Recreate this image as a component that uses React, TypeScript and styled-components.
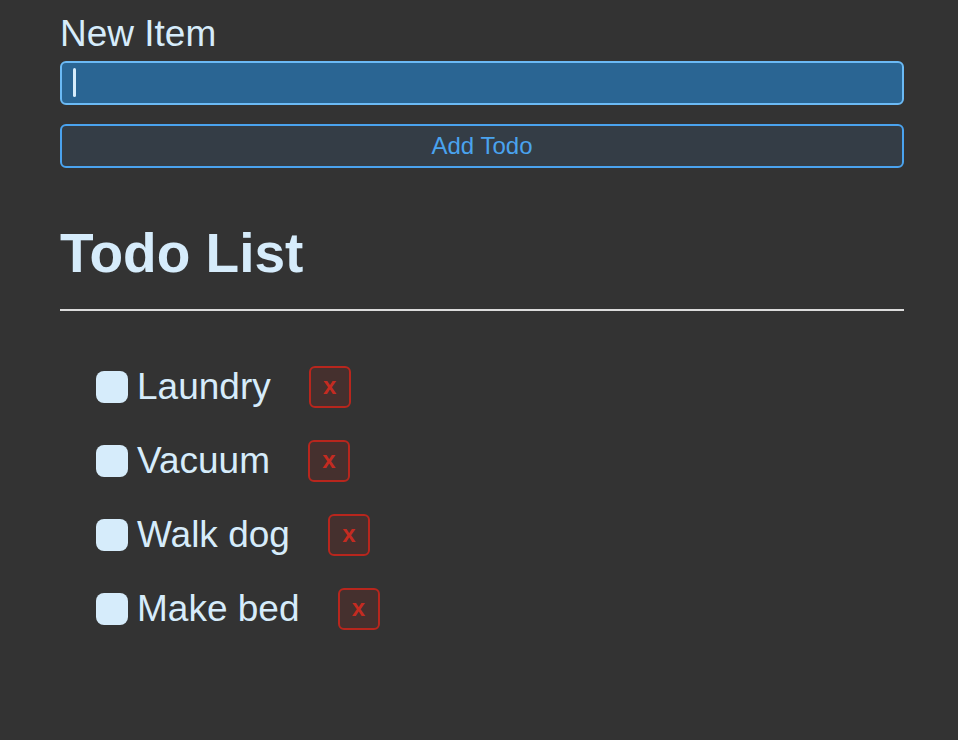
import React from "react";
import styled, { createGlobalStyle } from "styled-components";

const Global = createGlobalStyle`
  html, body { margin: 0; padding: 0; background: #333333; }
  body { font-family: "Liberation Sans", Arial, sans-serif; color: #d6ecfb; }
  * { box-sizing: border-box; }
`;

const Page = styled.div`
  width: 958px;
  min-height: 740px;
  padding: 13px 54px 0 60px;
  background: #333333;
`;

const Label = styled.label`
  display: block;
  font-size: 37px;
  line-height: 42px;
  color: #d6ecfb;
  margin-bottom: 6px;
`;

const InputWrap = styled.div`
  position: relative;
`;

const TextInput = styled.input`
  display: block;
  width: 100%;
  height: 44px;
  border: 2px solid #6bbaf5;
  border-radius: 6px;
  background: #2a6593;
  color: #d6ecfb;
  font-family: inherit;
  font-size: 24px;
  padding: 0 12px;
  outline: none;
`;

const Caret = styled.span`
  position: absolute;
  left: 13px;
  top: 7px;
  width: 3px;
  height: 29px;
  border-radius: 2px;
  background: #d6ecfb;
`;

const AddButton = styled.button`
  display: block;
  width: 100%;
  height: 44px;
  margin-top: 19px;
  border: 2px solid #4aa3ef;
  border-radius: 6px;
  background: #343d46;
  color: #4aa3ef;
  font-family: inherit;
  font-size: 24px;
  cursor: pointer;
`;

const Heading = styled.h1`
  margin: 54px 0 0;
  font-size: 55px;
  line-height: 62px;
  font-weight: bold;
  color: #d6ecfb;
`;

const Rule = styled.hr`
  margin: 25px 0 0;
  border: none;
  height: 2px;
  background: #dcdcdc;
`;

const List = styled.ul`
  list-style: none;
  margin: 55px 0 0;
  padding: 0 0 0 36px;
  display: flex;
  flex-direction: column;
  gap: 32px;
`;

const Row = styled.li`
  display: flex;
  align-items: center;
  height: 42px;
`;

const Check = styled.span`
  display: inline-block;
  width: 32px;
  height: 32px;
  border-radius: 8px;
  background: #d6ecfb;
  flex-shrink: 0;
`;

const ItemText = styled.span`
  font-size: 37px;
  line-height: 42px;
  margin-left: 9px;
  color: #d6ecfb;
`;

const DeleteButton = styled.button`
  width: 42px;
  height: 42px;
  margin-left: 38px;
  border: 2px solid #b8261d;
  border-radius: 6px;
  background: #45302e;
  color: #c42b21;
  font-family: inherit;
  font-size: 24px;
  font-weight: bold;
  line-height: 1;
  padding: 0 0 3px;
  display: flex;
  align-items: center;
  justify-content: center;
`;

const todos = ["Laundry", "Vacuum", "Walk dog", "Make bed"];

export default function App() {
  return (
    <>
      <Global />
      <Page>
        <Label htmlFor="new-item">New Item</Label>
        <InputWrap>
          <TextInput id="new-item" type="text" />
          <Caret />
        </InputWrap>
        <AddButton>Add Todo</AddButton>
        <Heading>Todo List</Heading>
        <Rule />
        <List>
          {todos.map((t) => (
            <Row key={t}>
              <Check />
              <ItemText>{t}</ItemText>
              <DeleteButton>x</DeleteButton>
            </Row>
          ))}
        </List>
      </Page>
    </>
  );
}
